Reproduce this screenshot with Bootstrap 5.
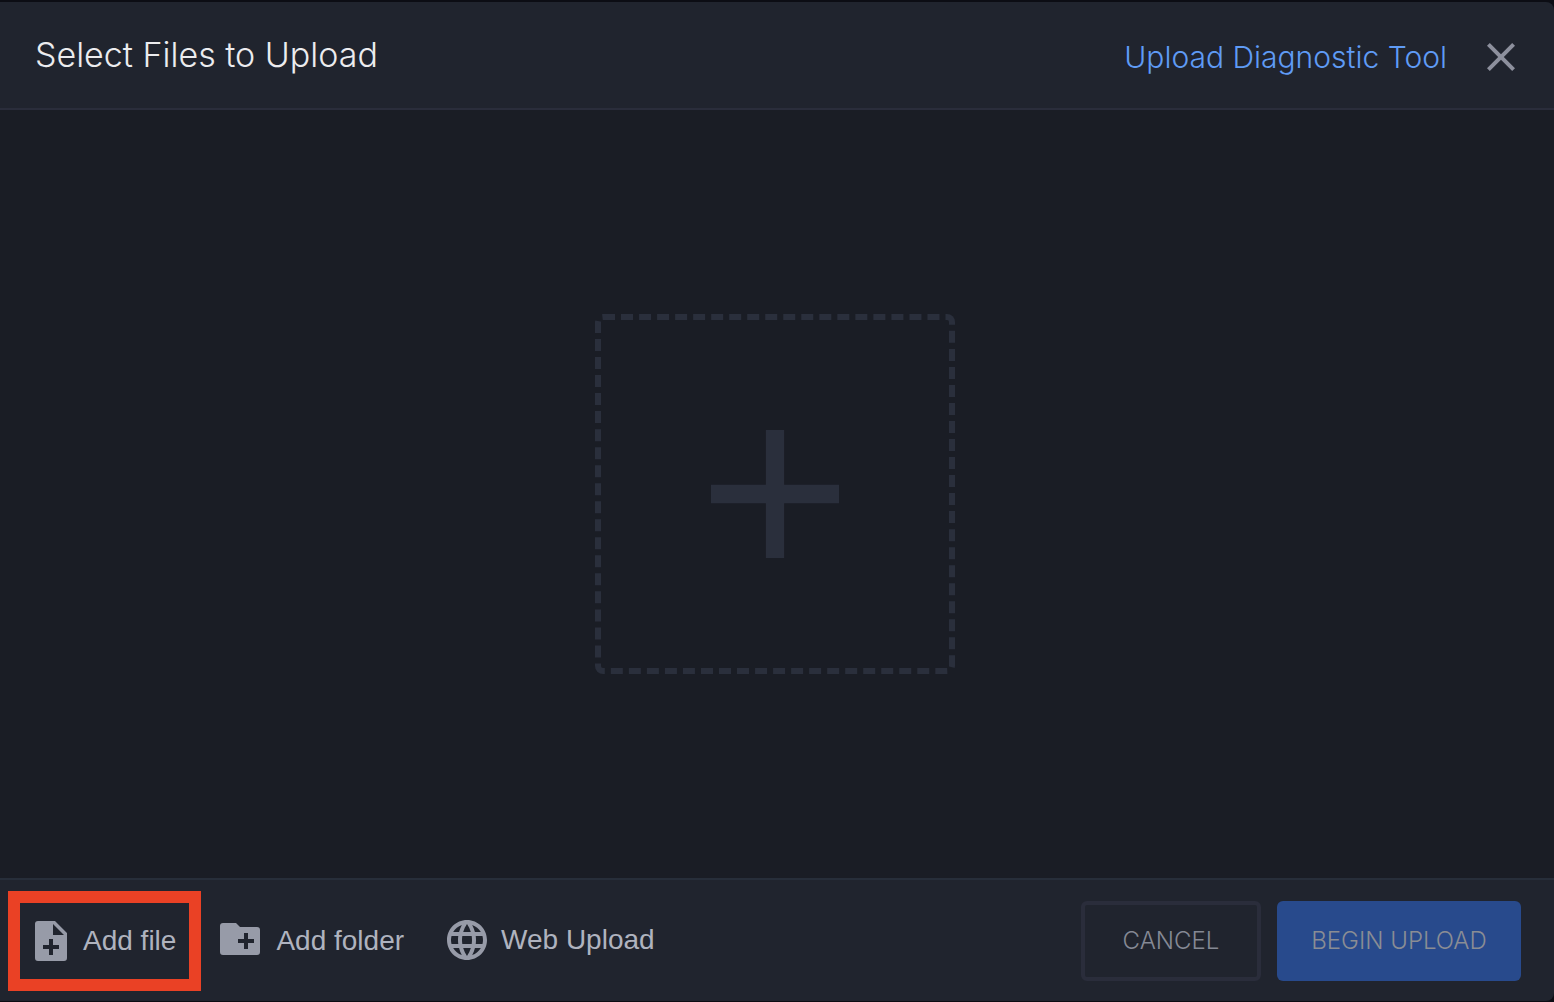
<!DOCTYPE html>
<html lang="en">
<head>
<meta charset="utf-8">
<meta name="viewport" content="width=device-width, initial-scale=1">
<title>Select Files to Upload</title>
<link href="https://cdn.jsdelivr.net/npm/bootstrap@5.3.0/dist/css/bootstrap.min.css" rel="stylesheet">
<style>
  body { background: #0c0d14; font-family: Inter, sans-serif; font-weight: 300; }
  .upload-dialog { padding: 2px 0 1px; }
  .dialog-head, .dialog-foot { background: #20242e; }
  .dialog-head { height: 108px; border-bottom: 2px solid #2a2d3b; padding: 0 29px 0 35px; border-radius: 0 8px 0 0; }
  .dialog-head h1 { font-size: 34px; font-weight: 300; line-height: 44px; color: #ececef; }
  .head-tools { gap: 30px; }
  .tool-link { font-size: 30px; line-height: 44px; color: #5f9bf5; }
  .dialog-body { background: #1a1d25; padding-right: 4px; }
  .dialog-foot { height: 123px; border-top: 2px solid #272e3a; padding: 0 33px 0 8px; border-radius: 0 0 8px 0; }
  .plain-btn { background: none; border: 0; padding: 0; }
  .drop-zone { width: 360px; height: 360px; border: 6px dashed #2a2f3c; border-radius: 8px; }
  .source-btn { gap: 8px; font-family: "Liberation Sans", Arial, sans-serif; font-size: 28px; line-height: 32px; font-weight: 400; color: #afb3bf; white-space: nowrap; }
  .source-btn svg { color: #979ba8; }
  .highlighted { height: 100px; border: 12px solid #ea4125; padding: 0 13px 0 7px; }
  .source-list { gap: 15px; }
  .folder-btn { margin-right: 24px; gap: 12px; }
  .globe-btn { gap: 10px; padding-bottom: 2px; }
  .action-btn { height: 80px; font-size: 24px; font-weight: 300; border-radius: 6px; padding: 0; }
  .cancel-btn { width: 180px; border: 4px solid #2a2d3b; color: #858995; }
  .cancel-btn:hover { border-color: #3a3e4e; color: #a5a9b5; }
  .begin-btn, .begin-btn:disabled { width: 244px; background: #284a8c; border: 0; color: #8a8d94; opacity: 1; }
</style>
<script src="https://cdn.jsdelivr.net/npm/bootstrap@5.3.0/dist/js/bootstrap.bundle.min.js"></script>
</head>
<body>
<div class="upload-dialog d-flex flex-column min-vh-100">
  <header class="dialog-head d-flex align-items-center justify-content-between">
    <h1 class="m-0">Select Files to Upload</h1>
    <div class="head-tools d-flex align-items-center pt-1">
      <a class="tool-link text-decoration-none" href="#">Upload Diagnostic Tool</a>
      <button class="plain-btn d-flex" type="button" aria-label="Close">
        <svg width="48" height="48" viewBox="0 0 24 24" fill="#8d909d"><path d="M19 6.410 17.590 5 12 10.590 6.410 5 5 6.410 10.590 12 5 17.590 6.410 19 12 13.410 17.590 19 19 17.590 13.410 12z"/></svg>
      </button>
    </div>
  </header>
  <main class="dialog-body flex-fill d-flex align-items-center justify-content-center">
    <button class="plain-btn drop-zone d-flex align-items-center justify-content-center" type="button" aria-label="Choose files">
      <svg width="128" height="128" viewBox="0 0 14 14" fill="#2a2f3c"><path d="M14 8H8v6H6V8H0V6h6V0h2v6h6z"/></svg>
    </button>
  </main>
  <footer class="dialog-foot d-flex align-items-center justify-content-between">
    <div class="source-list d-flex align-items-center">
      <button class="plain-btn source-btn highlighted d-flex align-items-center" type="button">
        <svg width="48" height="48" viewBox="0 0 24 24" fill="currentColor"><path d="M14 2H5.500A1.500 1.500 0 0 0 4 3.500v17A1.500 1.500 0 0 0 5.500 22h13a1.500 1.500 0 0 0 1.500-1.500V8zM13 9V3.500L18.500 9zM11 14v-3h2v3h3v2h-3v3h-2v-3H8v-2z"/></svg>
        Add file
      </button>
      <button class="plain-btn source-btn folder-btn d-flex align-items-center" type="button">
        <svg width="48" height="48" viewBox="0 1 24 24" fill="currentColor"><path d="M20.500 6H12l-2-2H3.500A1.500 1.500 0 0 0 2 5.500v13A1.500 1.500 0 0 0 3.500 20h17a1.500 1.500 0 0 0 1.500-1.500v-11A1.500 1.500 0 0 0 20.500 6zM19 14h-3v3h-2v-3h-3v-2h3V9h2v3h3z"/></svg>
        Add folder
      </button>
      <button class="plain-btn source-btn globe-btn d-flex align-items-center" type="button">
        <svg width="48" height="48" viewBox="0 0 24 24" fill="currentColor"><path d="M11.990 2C6.470 2 2 6.480 2 12s4.470 10 9.990 10C17.520 22 22 17.520 22 12S17.520 2 11.990 2zm6.930 6h-2.950c-.320-1.250-.780-2.450-1.380-3.560 1.840.630 3.370 1.910 4.330 3.560zM12 4.040c.830 1.200 1.480 2.530 1.910 3.960h-3.820c.430-1.430 1.080-2.760 1.910-3.960zM4.260 14C4.100 13.360 4 12.690 4 12s.100-1.360.260-2h3.380c-.080.660-.140 1.320-.140 2s.060 1.340.140 2H4.260zm.820 2h2.950c.320 1.250.780 2.450 1.380 3.560-1.840-.630-3.370-1.900-4.330-3.560zm2.950-8H5.080c.960-1.660 2.490-2.930 4.330-3.560C8.810 5.550 8.350 6.750 8.030 8zM12 19.960c-.830-1.200-1.480-2.530-1.910-3.960h3.820c-.430 1.430-1.080 2.760-1.910 3.960zM14.340 14H9.660c-.090-.660-.160-1.320-.160-2s.070-1.350.160-2h4.680c.090.650.160 1.320.160 2s-.070 1.340-.160 2zm.250 5.560c.600-1.110 1.060-2.310 1.380-3.560h2.950c-.960 1.650-2.490 2.930-4.330 3.560zM16.360 14c.080-.660.140-1.320.140-2s-.060-1.340-.140-2h3.380c.160.640.260 1.310.260 2s-.100 1.360-.260 2h-3.380z"/></svg>
        Web Upload
      </button>
    </div>
    <div class="d-flex gap-3">
      <button class="btn action-btn cancel-btn" type="button">CANCEL</button>
      <button class="btn action-btn begin-btn" type="button" disabled>BEGIN UPLOAD</button>
    </div>
  </footer>
</div>
</body>
</html>
